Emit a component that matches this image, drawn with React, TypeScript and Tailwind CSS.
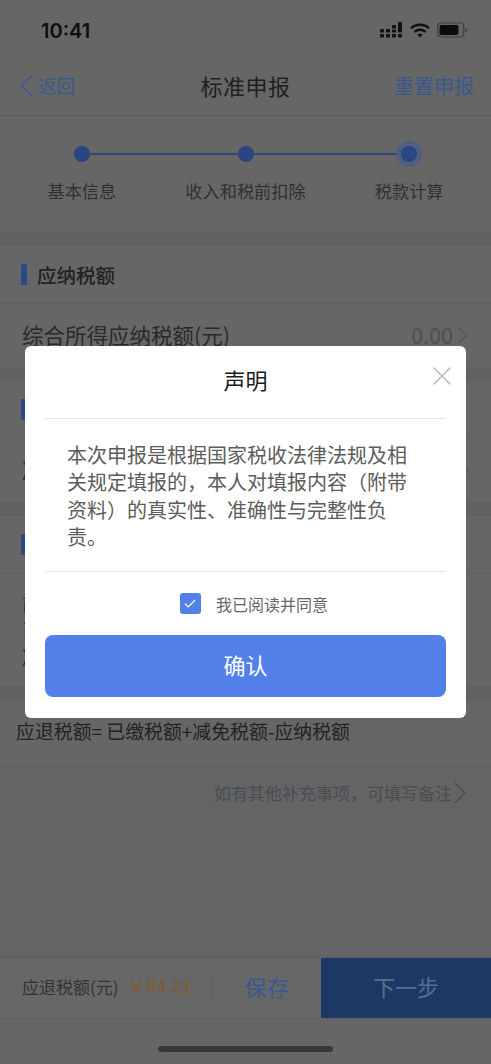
import { X, Check } from 'lucide-react';

const font = { fontFamily: '"Noto Sans CJK SC", "Liberation Sans", sans-serif' };

function Chevron({ w, h, left, className }: { w: number; h: number; left?: boolean; className?: string }) {
  const pts = left ? `${w - 1},1 1,${h / 2} ${w - 1},${h - 1}` : `1,1 ${w - 1},${h / 2} 1,${h - 1}`;
  return (
    <svg width={w} height={h} viewBox={`0 0 ${w} ${h}`} fill="none" stroke="currentColor" strokeWidth="1.5" className={className}>
      <polyline points={pts} />
    </svg>
  );
}

function StatusIcons() {
  return (
    <div className="flex items-center gap-[7px]">
      <svg width="23" height="16" viewBox="0 0 23 16" fill="#111">
        <rect x="0" y="7" width="4" height="3.5" rx="0.8" />
        <rect x="0" y="12" width="4" height="3.5" rx="0.8" />
        <rect x="6" y="7" width="4" height="3.5" rx="0.8" />
        <rect x="6" y="12" width="4" height="3.5" rx="0.8" />
        <rect x="12" y="3" width="4" height="3.5" rx="0.8" />
        <rect x="12" y="7.5" width="4" height="3" rx="0.8" />
        <rect x="12" y="12" width="4" height="3.5" rx="0.8" />
        <rect x="18" y="0" width="4" height="10.5" rx="0.8" />
        <rect x="18" y="12" width="4" height="3.5" rx="0.8" />
      </svg>
      <svg width="20" height="15" viewBox="0 0 20 15" fill="none" stroke="#111" strokeWidth="2.4">
        <path d="M1 5.2C6 .6 14 .6 19 5.2" />
        <path d="M4.5 8.8c3.2-2.8 7.8-2.8 11 0" />
        <path d="M10 14.6l-2.8-3c1.7-1.2 3.9-1.2 5.6 0z" fill="#111" stroke="none" />
      </svg>
      <svg width="30" height="16" viewBox="0 0 30 16" fill="none">
        <rect x="0.7" y="1" width="26" height="14" rx="3.5" stroke="#3f3f3f" strokeWidth="1.2" />
        <rect x="2.5" y="3" width="19" height="10" rx="2" fill="#0c0c0c" />
        <rect x="28.2" y="6" width="1.4" height="4" rx="0.7" fill="#3f3f3f" />
      </svg>
    </div>
  );
}

function SectionTitle({ title }: { title: string }) {
  return (
    <div className="h-[58px] flex items-center pl-[21px] gap-[10px] border-b border-[#606060]">
      <span className="w-[6px] h-[21px] bg-[#2c4a88] rounded-[1px]" />
      <span className="text-[19.5px] font-medium text-[#222]">{title}</span>
    </div>
  );
}

function AmountRow({ label, value }: { label: string; value: string }) {
  return (
    <div className="h-[63px] flex items-center justify-between pl-[22px] pr-[23px]">
      <span className="text-[21.5px] text-[#2a2a2a]">{label}</span>
      <span className="flex items-center gap-[4px] text-[21.5px] text-[#4f4f4f]">
        {value}
        <Chevron w={11} h={17} className="text-[#555]" />
      </span>
    </div>
  );
}

export default function App() {
  return (
    <div style={font} className="relative w-[491px] h-[1064px] overflow-hidden bg-[#666666] flex flex-col">
      {/* Status bar */}
      <div className="h-[58px] pt-[16px] pl-[41px] pr-[24px] flex items-start justify-between">
        <span className="text-[20px] leading-[30px] font-semibold text-[#0f0f0f]" style={{ fontFamily: 'Inter, sans-serif' }}>10:41</span>
        <div className="h-[28px] flex items-center"><StatusIcons /></div>
      </div>

      {/* Nav */}
      <div className="h-[58px] grid grid-cols-[1fr_auto_1fr] items-center pb-[2px] pl-[20px] pr-[17px] border-b border-[#5c5c5c]">
        <div className="flex items-center gap-[5px] text-[#3a5890] text-[18.5px]">
          <Chevron w={13} h={22} left />
          返回
        </div>
        <div className="mr-[3px] text-[22px] tracking-[0.5px] text-[#1f1f1f]">标准申报</div>
        <div className="text-[20px] text-[#3a5890] text-right">重置申报</div>
      </div>

      {/* Steps */}
      <div className="h-[115px] flex flex-col pt-[29px]">
        <div className="flex items-center mx-[74px] h-[17px]">
          <span className="w-[16px] h-[16px] rounded-full bg-[#2a4682] shrink-0" />
          <span className="flex-1 h-[2px] bg-[#334774]" />
          <span className="w-[16px] h-[16px] rounded-full bg-[#2a4682] shrink-0" />
          <span className="flex-1 h-[2px] bg-[#334774]" />
          <span className="w-[16px] h-[16px] rounded-full bg-[#2a4682] ring-[5px] ring-[#505f80] shrink-0" />
        </div>
        <div className="grid grid-cols-3 mt-[17px] text-[17.2px] leading-[24px] text-[#303030] text-center">
          <span>基本信息</span>
          <span>收入和税前扣除</span>
          <span>税款计算</span>
        </div>
      </div>

      <div className="h-[15px] bg-[#5f6163]" />
      <SectionTitle title="应纳税额" />
      <AmountRow label="综合所得应纳税额(元)" value="0.00" />
      <div className="h-[14px] bg-[#5f6163]" />
      <SectionTitle title="减免税额" />
      <AmountRow label="减免税额(元)" value="0.00" />
      <div className="h-[14px] bg-[#5f6163]" />
      <SectionTitle title="应退税额" />
      <div className="h-[112px] pl-[22px] pr-[22px] pt-[16px] text-[20px] leading-[27px] text-[#2a2a2a]">
        <div>前期已缴税额</div>
        <div>已缴税额合计</div>
        <div>减免税额合计</div>
      </div>
      <div className="h-[15px] bg-[#5f6163]" />

      {/* Formula */}
      <div className="h-[62px] flex items-center pb-[2px] pl-[16px] text-[18.9px] text-[#222]">
        应退税额= 已缴税额+减免税额-应纳税额
      </div>

      {/* Remark */}
      <div className="flex-1 bg-[#626466] pt-[9px] pr-[25px] flex items-start justify-end">
        <span className="flex items-center gap-[2px] text-[17px] leading-[42px] text-[#4b4d4f]">
          如有其他补充事项，可填写备注
          <Chevron w={12} h={22} />
        </span>
      </div>

      {/* Bottom bar */}
      <div className="h-[62px] flex border-t border-[#5d5f60] border-b bg-[#676767]">
        <div className="flex items-center pl-[22px] w-[212px] shrink-0 gap-[13px] pb-[2px]">
          <span className="text-[17px] text-[#333]">应退税额(元)</span>
          <span className="text-[18px] text-[#835a2e] whitespace-nowrap" style={{ fontFamily: '"Liberation Sans", sans-serif' }}>¥ 84.21</span>
        </div>
        <div className="flex items-center w-[109px] shrink-0">
          <span className="w-px h-[30px] bg-[#5f5f5f]" />
          <span className="flex-1 text-center text-[22px] tracking-[0.5px] pb-[3px] text-[#3a5890]">保存</span>
        </div>
        <div className="flex-1 bg-[#1e3866] flex items-center justify-center pb-[3px] text-[22px] text-[#5a6d90]">下一步</div>
      </div>

      {/* Home indicator */}
      <div className="h-[45px] bg-[#666666] flex justify-center pt-[27px]">
        <span className="w-[175px] h-[6px] rounded-full bg-[#383838]" />
      </div>

      {/* Statement dialog */}
      <div className="absolute left-[25px] top-[346px] w-[441px] h-[372px] bg-white rounded-[6px] px-[20px] flex flex-col">
        <div className="relative h-[73px] flex items-center justify-center pb-[5px] border-b border-[#e6e6e6]">
          <span className="text-[22px] text-[#1a1a1a]">声明</span>
          <X size={32} strokeWidth={1} className="absolute right-[-12px] top-[14px] text-[#b8b8b8]" />
        </div>
        <div className="h-[153px] border-b border-[#e6e6e6] px-[22px] pt-[22px] text-[20px] leading-[27.3px] text-[#5c5c5c]">
          本次申报是根据国家税收法律法规及相关规定填报的，本人对填报内容（附带资料）的真实性、准确性与完整性负责。
        </div>
        <div className="h-[63px] flex items-center justify-center gap-[15px] pl-[17px]">
          <span className="w-[21px] h-[21px] rounded-[3px] bg-[#5280e8] flex items-center justify-center">
            <Check size={14} strokeWidth={2} className="text-white" />
          </span>
          <span className="text-[16px] text-[#666]">我已阅读并同意</span>
        </div>
        <div className="h-[62px] rounded-[8px] bg-[#5280e8] flex items-center justify-center pb-[4px] text-[22px] text-white">确认</div>
      </div>
    </div>
  );
}
